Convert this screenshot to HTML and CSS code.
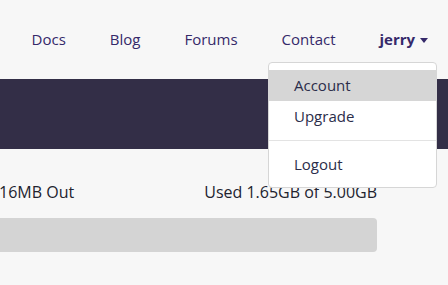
FILE: index.html
```html
<!DOCTYPE html>
<html lang="en">
<head>
    <meta charset="UTF-8">
    <title>Dashboard</title>
    <link rel="stylesheet" href="styles.css">
</head>
<body>
    <div class="navbar">
        <ul class="nav">
            <li><a href="#">Docs</a></li>
            <li><a href="#">Blog</a></li>
            <li><a href="#">Forums</a></li>
            <li><a href="#">Contact</a></li>
            <li class="user">
                <a href="#" class="user-toggle">jerry <span class="caret"></span></a>
                <ul class="dropdown">
                    <li class="active"><a href="#">Account</a></li>
                    <li><a href="#">Upgrade</a></li>
                    <li class="divider"></li>
                    <li><a href="#">Logout</a></li>
                </ul>
            </li>
        </ul>
    </div>

    <div class="banner"></div>

    <div class="usage">
        <div class="usage-text">
            <span class="transfer">16MB Out</span>
            <span>Used 1.65GB of 5.00GB</span>
        </div>
        <div class="progress"></div>
    </div>
</body>
</html>
```

FILE: styles.css
```css
body {
    font-family: "Open Sans", "Noto Sans", sans-serif;
    font-size: 15px;
    background-color: #f7f7f7;
    color: #22232f;
    margin: 0;
    padding: 0;
}
a {
    text-decoration: none;
}
.navbar {
    height: 79px;
}
.nav {
    list-style: none;
    margin: 0;
    padding: 0 20px 0 0;
    display: flex;
    justify-content: flex-end;
}
.nav > li {
    position: relative;
}
.nav > li > a {
    display: block;
    padding: 29px 22px 0;
    line-height: 21px;
    color: #35296a;
}
.nav > li:last-child > a {
    padding-right: 0;
}
.user-toggle {
    font-weight: bold;
}
.caret {
    display: inline-block;
    width: 0;
    height: 0;
    margin-left: 1px;
    vertical-align: middle;
    border-top: 5px solid #35296a;
    border-left: 4.5px solid transparent;
    border-right: 4.5px solid transparent;
}
.dropdown {
    position: absolute;
    top: 62px;
    right: -9px;
    width: 167px;
    list-style: none;
    margin: 0;
    padding: 7px 0;
    background: #fff;
    border: 1px solid #d6d6d6;
    border-radius: 4px;
    z-index: 2;
}
.dropdown a {
    display: block;
    padding: 5px 25px;
    line-height: 21px;
    color: #2b2d4a;
}
.dropdown .active a {
    background-color: #d6d6d6;
}
.dropdown .divider {
    height: 1px;
    margin: 8px 0;
    background-color: #e3e3e3;
}
.banner {
    height: 70px;
    background-color: #332e47;
}
.usage {
    width: 377px;
    padding-top: 33px;
}
.usage-text {
    display: flex;
    justify-content: space-between;
    font-size: 16px;
    line-height: 21px;
}
.transfer {
    margin-left: -1px;
}
.progress {
    height: 34px;
    margin-top: 15px;
    background-color: #d4d4d4;
    border-radius: 0 4px 4px 0;
}
```
